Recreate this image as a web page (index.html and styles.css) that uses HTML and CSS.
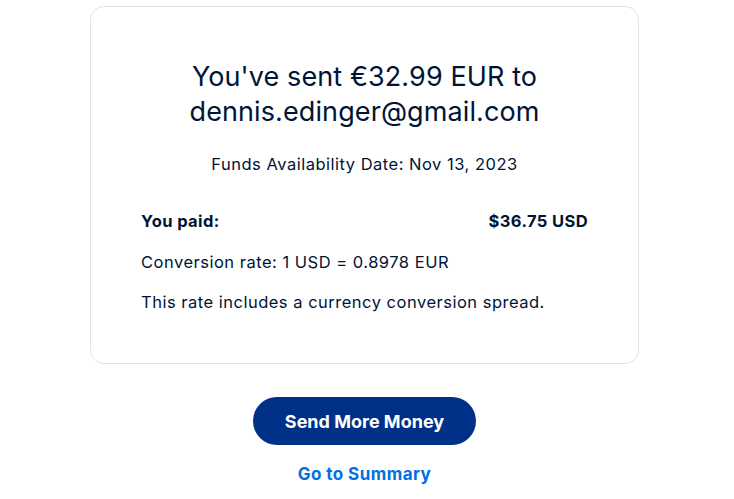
FILE: index.html
```html
<!DOCTYPE html>
<html>
<head>
<meta charset="utf-8">
<link rel="stylesheet" href="styles.css">
</head>
<body>
<main class="page">
  <section class="card">
    <h1 class="title">You've sent €32.99 EUR to<br>dennis.edinger@gmail.com</h1>
    <p class="funds">Funds Availability Date: Nov 13, 2023</p>
    <div class="paid-row">
      <span>You paid:</span>
      <span>$36.75 USD</span>
    </div>
    <p class="info info-first">Conversion rate: 1 USD = 0.8978 EUR</p>
    <p class="info">This rate includes a currency conversion spread.</p>
  </section>
  <button class="primary">Send More Money</button>
  <a class="link" href="#">Go to Summary</a>
</main>
</body>
</html>
```
FILE: styles.css
```css
* { box-sizing: border-box; }
html, body { margin: 0; padding: 0; background: #fff; }
body {
  font-family: Inter, "Noto Sans", "Liberation Sans", sans-serif;
  color: #001435;
}
.page {
  width: 729px;
  display: flex;
  flex-direction: column;
  align-items: center;
  padding-top: 6px;
}
.card {
  width: 549px;
  border: 1px solid #e3e3e3;
  border-radius: 14px;
  padding: 52px 50px 49px;
}
.title {
  margin: 0;
  font-size: 27px;
  line-height: 35px;
  font-weight: 400;
  text-align: center;
  letter-spacing: 0.1px;
}
.funds {
  margin: 23px 0 0;
  font-size: 16.5px;
  line-height: 24px;
  text-align: center;
  letter-spacing: 0.5px;
}
.paid-row {
  display: flex;
  justify-content: space-between;
  margin-top: 33px;
  font-size: 16.5px;
  line-height: 24px;
  font-weight: 700;
  letter-spacing: 0.4px;
}
.info {
  margin: 16px 0 0;
  font-size: 16.5px;
  line-height: 24px;
  letter-spacing: 0.5px;
}
.info-first { margin-top: 17px; }
.primary {
  margin-top: 33px;
  width: 223px;
  height: 48px;
  border: none;
  border-radius: 24px;
  background: #003087;
  color: #fff;
  font-family: inherit;
  font-size: 18px;
  font-weight: 700;
}
.link {
  margin-top: 17px;
  color: #0070e0;
  font-size: 17px;
  font-weight: 700;
  line-height: 24px;
  letter-spacing: 0.45px;
  text-decoration: none;
}
```
